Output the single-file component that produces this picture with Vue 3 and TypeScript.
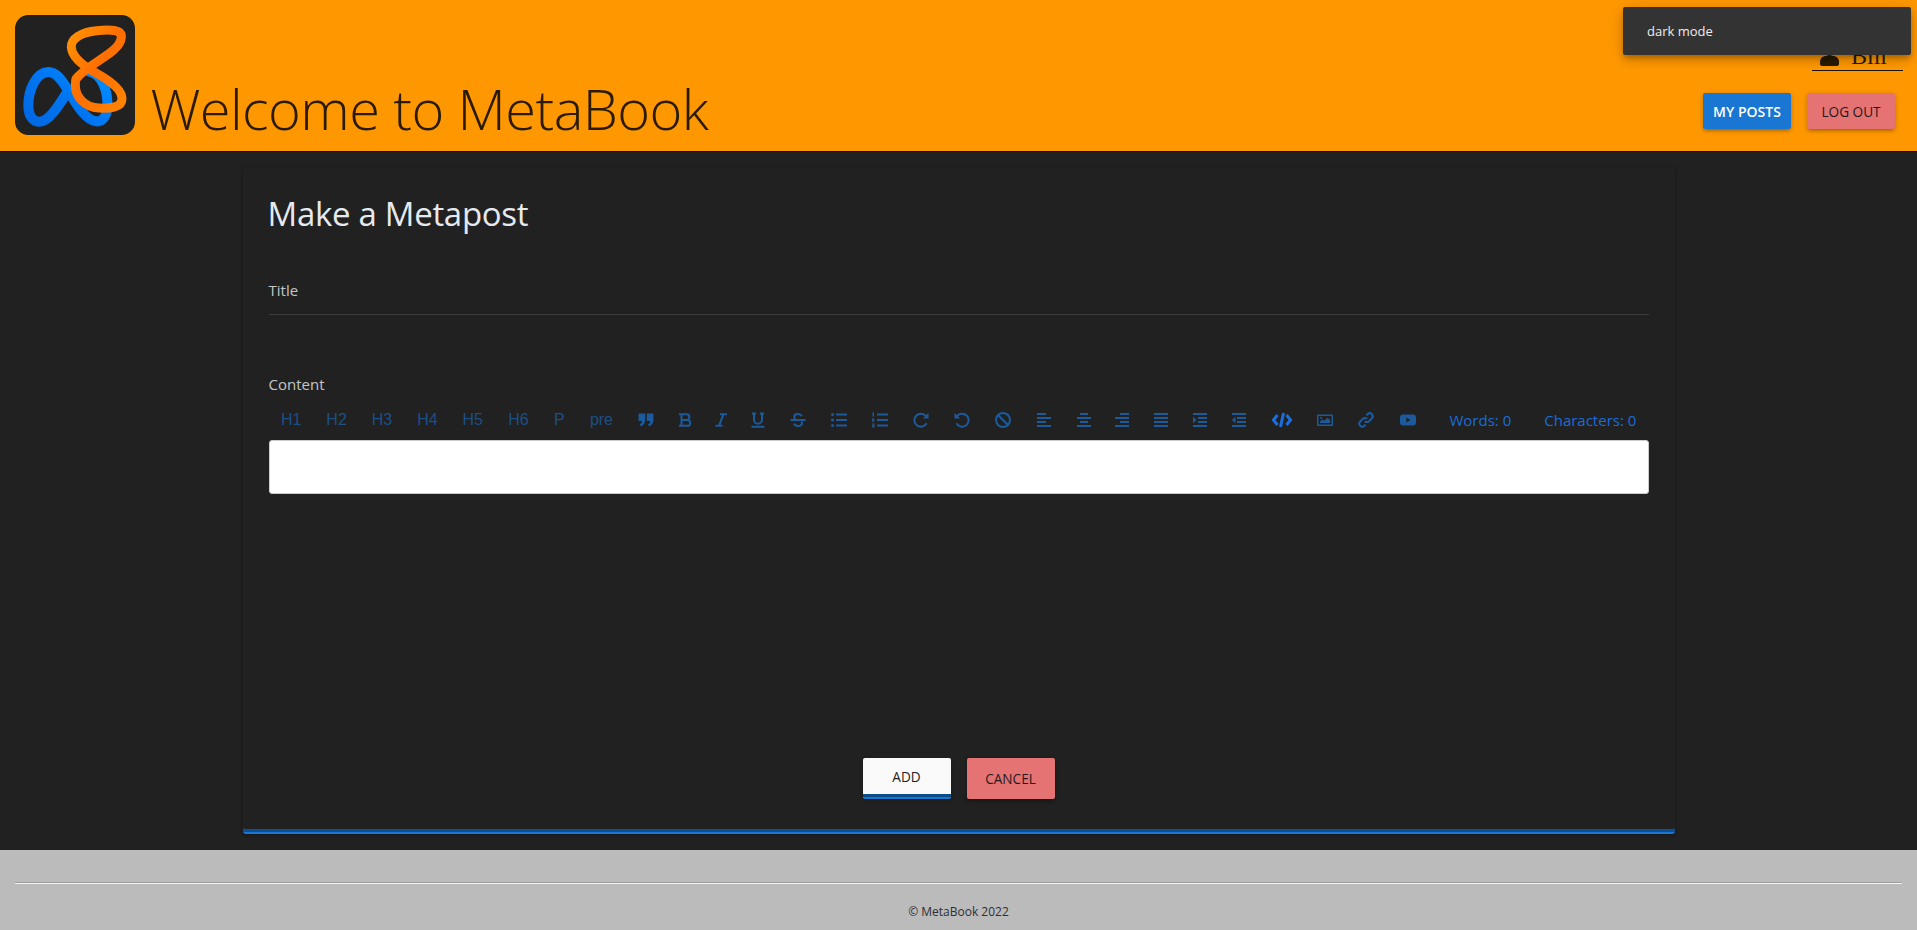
<script setup lang="ts">
interface Tool {
  id: string
  width: number
  label?: string
  paths?: string[]
  fills?: string[]
  bright?: boolean
  size?: number
}

const lines = (rows: [number, number][]) => rows.map(([a, b], i) => `M${a} ${2 + i * 4}H${b}`).join('')

const tools: Tool[] = [
  { id: 'h1', width: 45.4, label: 'H1' },
  { id: 'h2', width: 45.4, label: 'H2' },
  { id: 'h3', width: 45.4, label: 'H3' },
  { id: 'h4', width: 45.4, label: 'H4' },
  { id: 'h5', width: 45.4, label: 'H5' },
  { id: 'h6', width: 46, label: 'H6' },
  { id: 'p', width: 36, label: 'P' },
  { id: 'pre', width: 48, label: 'pre' },
  {
    id: 'quote', width: 41.4,
    fills: ['M0.5 1.5h6.7v6.6c0 3-1.7 5-4.3 6.4l-1.2-2c1.4-.8 2.2-1.8 2.3-3.4H.5zM8.8 1.5h6.7v6.6c0 3-1.7 5-4.3 6.4l-1.2-2c1.4-.8 2.2-1.8 2.3-3.4H8.8z']
  },
  { id: 'bold', width: 37.2, paths: ['M2 2.2h7.5a2.9 2.9 0 0 1 0 5.8H4.5M4.5 8h5.8a2.9 2.9 0 0 1 0 5.8H2M4.5 2.2v11.6'] },
  { id: 'italic', width: 34.2, paths: ['M7 2.2h7M2.5 13.8h7M10.5 2.2 6 13.8'] },
  { id: 'underline', width: 40.4, paths: ['M2 1.6h4M10 1.6h4M4 1.6v6.2a4 4 0 0 0 8 0V1.6M1.5 14.8h13'] },
  { id: 'strike', width: 39.6, paths: ['M0.5 8h15M11.8 4.2C11 2.6 9.6 2 8 2 5.8 2 4.2 3.2 4.2 4.8c0 1 .5 1.8 1.2 2.3M11.4 9.6c.4.5.6 1 .6 1.6C12 13 10.2 14 8 14c-1.8 0-3.3-.7-4-2.4'] },
  { id: 'ul', width: 42.4, paths: ['M5 2.5h11M5 8h11M5 13.5h11'], fills: ['M0 2.5a1.5 1.5 0 1 0 3 0a1.5 1.5 0 1 0-3 0zM0 8a1.5 1.5 0 1 0 3 0a1.5 1.5 0 1 0-3 0zM0 13.5a1.5 1.5 0 1 0 3 0a1.5 1.5 0 1 0-3 0z'] },
  { id: 'ol', width: 39.6, paths: ['M5 2.5h11M5 8h11M5 13.5h11'], fills: ['M0.5 0.5h1.5v4h-1.5zM0 6.5h2.5v1.3H1.5v.7h1v1.3H0zM0 11.5h2.5v4H0v-1h1v-.5H0v-1h1v-.5H0z'] },
  { id: 'redo', width: 42.4, paths: ['M13 4.2A6.5 6.5 0 1 0 13.6 11.3'], fills: ['M9.8 6.5H15.5V.8z'] },
  { id: 'undo', width: 39.6, paths: ['M3 4.2A6.5 6.5 0 1 1 2.4 11.3'], fills: ['M6.2 6.5H.5V.8z'] },
  { id: 'clear', width: 42.4, paths: ['M8 1a7 7 0 1 0 0 14a7 7 0 1 0 0-14zM3 3l10 10'] },
  { id: 'left', width: 39.6, paths: [lines([[1, 10], [1, 15], [1, 10], [1, 15]])] },
  { id: 'center', width: 40.4, paths: [lines([[4, 12], [1, 15], [4, 12], [1, 15]])] },
  { id: 'right', width: 35.6, paths: [lines([[6, 15], [1, 15], [6, 15], [1, 15]])] },
  { id: 'justify', width: 42.4, paths: [lines([[1, 15], [1, 15], [1, 15], [1, 15]])] },
  { id: 'indent', width: 35.6, paths: ['M1 2h14M6 6h9M6 10h9M1 14h14'], fills: ['M1 4.7 4.5 8 1 11.3z'] },
  { id: 'outdent', width: 42.4, paths: ['M1 2h14M6 6h9M6 10h9M1 14h14'], fills: ['M4.5 4.7 1 8l3.5 3.3z'] },
  { id: 'code', width: 43.6, bright: true, size: 20, paths: ['M5.5 5 1.5 10l4 5M14.5 5l4 5-4 5M11.5 3 8.5 17'] },
  { id: 'image', width: 42.4, fills: ['M1 2.5h14a1 1 0 0 1 1 1v9.5a1 1 0 0 1-1 1H1a1 1 0 0 1-1-1V3.5a1 1 0 0 1 1-1zM1.5 4v8.5h13V4zM3 11V9.5l2.5-2 2 1.2 3-3L13 8v3zM3 6a1 1 0 1 0 2 0a1 1 0 1 0-2 0z'] },
  { id: 'link', width: 39.6, paths: ['M6.8 9.2a3 3 0 0 0 4.3 0l2.7-2.7a3 3 0 0 0-4.3-4.3L8.3 3.4M9.2 6.8a3 3 0 0 0-4.3 0L2.2 9.5a3 3 0 0 0 4.3 4.3l1.2-1.2'] },
  { id: 'youtube', width: 44.4, fills: ['M3 2.5h10a3 3 0 0 1 3 3v5a3 3 0 0 1-3 3H3a3 3 0 0 1-3-3v-5a3 3 0 0 1 3-3zM6.3 5.5v5L10.5 8z'] }
]
</script>

<template>
  <div class="page">
    <header class="topbar">
      <div class="brand">
        <svg class="logo" viewBox="45 45 360 360" role="img" aria-label="MetaBook logo">
          <defs>
            <linearGradient id="blue-grad" x1="0" y1="1" x2="1" y2="0.2">
              <stop offset="0" stop-color="#0068e4" />
              <stop offset="0.6" stop-color="#0078f4" />
              <stop offset="1" stop-color="#008cff" />
            </linearGradient>
            <linearGradient id="orange-grad" x1="0" y1="0" x2="1" y2="1">
              <stop offset="0" stop-color="#ff9200" />
              <stop offset="0.5" stop-color="#ff6e00" />
              <stop offset="1" stop-color="#ff8400" />
            </linearGradient>
          </defs>
          <rect x="45" y="45" width="360" height="360" rx="40" fill="#212121" />
          <path
            d="M268 215C305 222 324 270 322 320C321 352 305 366 288 364C258 360 232 318 206 274C186 240 168 215 144 216C108 218 84 270 85 320C86 350 100 366 118 365C150 364 180 310 207 268"
            fill="none"
            stroke="url(#blue-grad)"
            stroke-width="30"
            stroke-linecap="round"
          />
          <path
            d="M228 237C262 190 360 160 364 112C366 88 330 88 290 92C245 96 212 116 214 142C216 170 250 198 290 220C330 242 366 268 366 296C366 322 330 326 296 324C255 322 226 292 226 256C226 246 226 242 228 237"
            fill="none"
            stroke="url(#orange-grad)"
            stroke-width="27"
            stroke-linecap="round"
          />
        </svg>
        <h1 class="welcome">Welcome to MetaBook</h1>
      </div>

      <div class="account">
        <div class="user">
          <svg class="user-icon" viewBox="0 0 19 26" aria-hidden="true">
            <circle cx="9.5" cy="9" r="7" fill="currentColor" />
            <path d="M0 24v-2c0-4 3-6 6-6h7c3 0 6 2 6 6v2c0 1-1 2-2 2H2c-1 0-2-1-2-2z" fill="currentColor" />
          </svg>
          <span class="user-name">Bill</span>
        </div>
        <div class="account-actions">
          <button class="btn btn-blue" type="button">MY POSTS</button>
          <button class="btn btn-red" type="button">LOG OUT</button>
        </div>
      </div>

      <div class="toast">dark mode</div>
    </header>

    <main class="content">
      <section class="card">
        <h2 class="card-title">Make a Metapost</h2>

        <div class="field">
          <label class="field-label">Title</label>
        </div>

        <div class="editor">
          <label class="editor-label">Content</label>
          <div class="toolbar">
            <span
              v-for="tool in tools"
              :key="tool.id"
              class="tool"
              :class="{ bright: tool.bright }"
              :style="{ width: tool.width + 'px' }"
            >
              <template v-if="tool.label">{{ tool.label }}</template>
              <svg
                v-else
                class="tool-icon"
                :style="tool.size ? { width: tool.size + 'px', height: tool.size + 'px' } : undefined"
                :viewBox="tool.size ? `0 0 ${tool.size} ${tool.size}` : '0 0 16 16'"
                aria-hidden="true"
              >
                <path v-for="d in tool.paths" :key="d" :d="d" class="stroke" />
                <path v-for="d in tool.fills" :key="d" :d="d" class="fill" fill-rule="evenodd" />
              </svg>
            </span>
            <span class="count count-words">Words: 0</span>
            <span class="count count-chars">Characters: 0</span>
          </div>
          <div class="editable"></div>
        </div>

        <div class="card-actions">
          <button class="btn btn-add" type="button"><span>ADD</span></button>
          <button class="btn btn-cancel" type="button">CANCEL</button>
        </div>
      </section>
    </main>

    <footer class="footer">
      <div class="footer-rule"></div>
      <p class="copyright">© MetaBook 2022</p>
    </footer>
  </div>
</template>

<style>
html,
body {
  margin: 0;
  background: #212121;
}
</style>

<style scoped>
.page {
  width: 1917px;
  height: 930px;
  display: flex;
  flex-direction: column;
  overflow: hidden;
  font-family: "Open Sans", "Noto Sans", sans-serif;
  background: #212121;
}

.topbar {
  position: relative;
  flex: 0 0 152px;
  box-sizing: border-box;
  display: flex;
  justify-content: space-between;
  padding: 15px 14px 0 15px;
  background: #ff9800;
  border-bottom: 1px solid #1c1200;
  color: #2a1b00;
}

.brand {
  display: flex;
  align-items: flex-end;
  height: 120px;
}

.logo {
  width: 120px;
  height: 120px;
  display: block;
}

.welcome {
  margin: 0 0 -11px 15.5px;
  font-size: 56px;
  line-height: 76px;
  font-weight: 340;
  letter-spacing: -0.6px;
  white-space: nowrap;
}

.account {
  display: flex;
  flex-direction: column;
  align-items: flex-end;
}

.user {
  box-sizing: border-box;
  width: 91px;
  height: 56px;
  padding: 30px 0 0 8px;
  display: flex;
  align-items: center;
  gap: 12px;
  border-bottom: 1px solid #1c1200;
}

.user-icon {
  width: 19px;
  height: 26px;
  flex: none;
  margin-top: -9px;
}

.user-name {
  font-family: "Liberation Serif", serif;
  font-size: 24px;
  line-height: 26px;
  margin-top: -4px;
}

.account-actions {
  display: flex;
  gap: 16px;
  margin-top: 22px;
  margin-right: 8px;
}

.btn {
  width: 88px;
  height: 36px;
  box-sizing: border-box;
  padding: 0;
  border: 0;
  border-radius: 2px;
  font-family: inherit;
  font-size: 13.6px;
  font-weight: 500;
  color: #261a1c;
  box-shadow: 0 3px 3px -2px rgba(0, 0, 0, 0.2), 0 2px 4px rgba(0, 0, 0, 0.14), 0 1px 6px rgba(0, 0, 0, 0.12);
}

.btn-blue {
  background: #1976d2;
  color: #fff;
  font-size: 14px;
  font-weight: 600;
}

.btn-red {
  background: #e57373;
}

.toast {
  position: absolute;
  top: 7px;
  left: 1623px;
  box-sizing: border-box;
  width: 288px;
  height: 48px;
  padding-left: 24px;
  display: flex;
  align-items: center;
  background: #333;
  border-radius: 2px;
  color: #eee;
  font-size: 13px;
  font-weight: 500;
  box-shadow: 0 3px 5px -1px rgba(0, 0, 0, 0.2), 0 6px 10px rgba(0, 0, 0, 0.14), 0 1px 18px rgba(0, 0, 0, 0.12);
}

.content {
  flex: 1;
  display: flex;
  justify-content: center;
  align-items: flex-start;
  padding-top: 16px;
}

.card {
  box-sizing: border-box;
  width: 1432px;
  height: 666px;
  padding: 0 26px;
  display: flex;
  flex-direction: column;
  background: #212121;
  border-bottom: 2px solid #1976d2;
  border-radius: 3px;
  box-shadow: inset 0 -3px 0 #0e4f94, 0 1px 4px rgba(0, 0, 0, 0.35);
}

.card-title {
  margin: 23px 0 0 -1px;
  font-size: 33px;
  line-height: 46px;
  font-weight: 400;
  letter-spacing: -0.3px;
  color: #e6eaf0;
}

.field {
  margin-top: 42px;
  height: 36px;
  box-sizing: border-box;
  border-bottom: 1px solid #3d3d3d;
}

.field-label,
.editor-label {
  display: block;
  font-size: 15px;
  line-height: 22px;
  color: #c6c6c6;
}

.editor {
  margin-top: 58px;
}

.toolbar {
  box-sizing: border-box;
  display: flex;
  align-items: center;
  height: 45px;
  padding-top: 5px;
  font-family: "Liberation Sans", sans-serif;
  font-size: 16px;
}

.tool {
  flex: none;
  display: flex;
  align-items: center;
  justify-content: center;
  color: #1c5a9c;
}

.tool:nth-child(-n + 8) {
  color: #1c4f86;
}

.tool.bright {
  color: #1a6fdc;
}

.tool-icon {
  width: 16px;
  height: 16px;
  display: block;
  overflow: visible;
}

.stroke {
  fill: none;
  stroke: currentColor;
  stroke-width: 2;
}

.fill {
  fill: currentColor;
}

.tool.bright .stroke {
  stroke-width: 3;
}

.count {
  font-family: "Open Sans", sans-serif;
  font-size: 15px;
  color: #1a6dd8;
  white-space: nowrap;
}

.count-words {
  margin-left: 19px;
}

.count-chars {
  margin-left: 33px;
}

.editable {
  height: 54px;
  box-sizing: border-box;
  background: #fff;
  border: 1px solid #ccc;
  border-radius: 3px;
}

.card-actions {
  margin-top: auto;
  margin-bottom: 33px;
  display: flex;
  justify-content: center;
  gap: 16px;
}

.btn-add,
.btn-cancel {
  height: 41px;
}

.btn-add {
  background: #fafafa;
  border-bottom: 2px solid #1976d2;
  padding-bottom: 3px;
  box-shadow: inset 0 -3px 0 #0e4c88, 0 2px 4px rgba(0, 0, 0, 0.14);
  color: #1d2024;
}

.btn-cancel {
  background: #e57373;
}

.footer {
  flex: 0 0 80px;
  box-sizing: border-box;
  padding: 32px 15px 0;
  background: #bbb;
}

.footer-rule {
  height: 0;
  border-top: 1px solid #9e9e9e;
  border-bottom: 1px solid #f2f2f2;
}

.copyright {
  margin: 19px 0 0;
  text-align: center;
  font-size: 12px;
  line-height: 18px;
  color: #2f2f33;
}
</style>
